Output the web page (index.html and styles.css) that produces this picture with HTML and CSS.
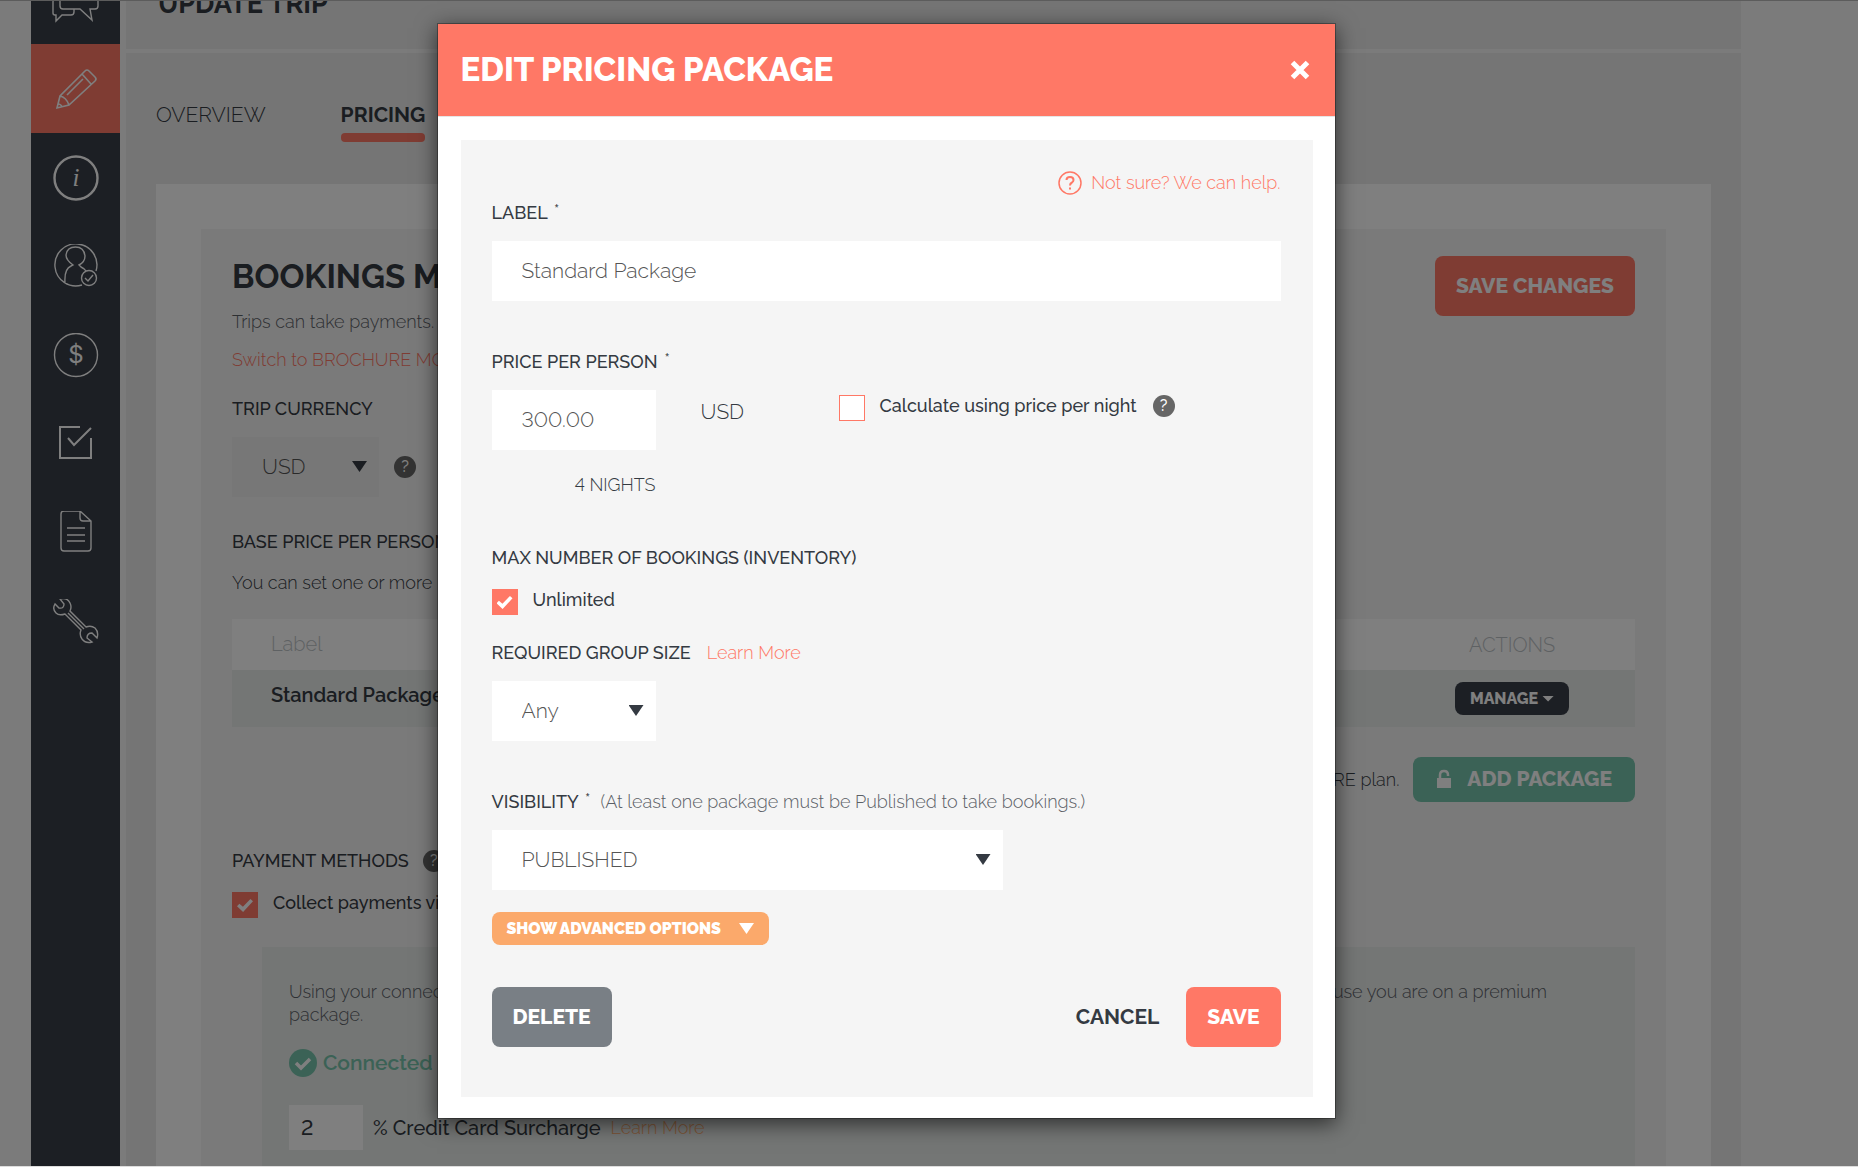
FILE: index.html
```html
<!DOCTYPE html>
<html lang="en">
<head>
  <meta charset="UTF-8" />
  <title>Update Trip - Pricing</title>
  <link rel="stylesheet" href="styles.css">
</head>
<body>
  <div class="stage">
    <div class="page">
      <!-- Sidebar -->
      <nav class="sidebar">
        <a href="#" aria-label="Messages">
          <svg width="50" height="46" viewBox="0 0 50 46"><path d="M9 20V4h35q3 0 3 3v22q0 3-3 3h-5l2 11-12-11H12q-3 0-3-3v-7M27 22v2M9 22H5q-3 0-3 3v11q0 2 2 2h1v6l6-6h9q3 0 3-3v-3"/></svg>
        </a>
        <a href="#" class="active" aria-label="Edit">
          <svg width="46" height="46" viewBox="0 0 46 46"><path stroke-width="1.600" d="M4 42l3-12L32 5q2-2 4 0l6 6q2 2 0 4L16 39zM7 30q6 1 9 9M29 8l9 10M5 38q3 0 4 3M14 29l16-16"/></svg>
        </a>
        <a href="#" aria-label="Info">
          <svg width="46" height="46" viewBox="0 0 46 46"><circle cx="23" cy="23" r="21.500" stroke-width="2.400"/><text x="23" y="31" class="glyph-info">i</text></svg>
        </a>
        <a href="#" aria-label="Travellers">
          <svg width="46" height="46" viewBox="0 2 46 46"><path d="M29 43A21 21 0 1 1 43 29M12 41q-1-14 6-17l2-1q-7-5-7-10 1-8 9.500-8T32 14q0 6-6 9l2 2q4 2 5 4"/><circle cx="36" cy="36" r="7.500"/><path d="M32 36l3 3 5-6"/></svg>
        </a>
        <a href="#" aria-label="Pricing">
          <svg width="46" height="46" viewBox="0 1 46 46"><circle cx="23" cy="23" r="21.500"/><text x="23" y="31" class="glyph-dollar">$</text></svg>
        </a>
        <a href="#" aria-label="Checklist">
          <svg width="46" height="46" viewBox="0 2 46 46"><path stroke-width="2" d="M27 7H7v31h31V18M15 18l6 7L38 8"/></svg>
        </a>
        <a href="#" aria-label="Documents">
          <svg width="46" height="46" viewBox="0 3 46 46"><path d="M27 3H11q-3 0-3 3v34q0 3 3 3h24q3 0 3-3V13zv7q0 3 3 3h8M14 20h18M14 27h18M14 33h18"/></svg>
        </a>
        <a href="#" aria-label="Settings">
          <svg width="46" height="48" viewBox="0 2 46 48"><path d="M7 1q7-2 10 4 2 4 0 8l16 16q5-2 9 1 4 4 2 10l-5-5q-5 0-5 5l5 4q-6 2-10-3-3-4-1-9L12 16q-6 2-9-1Q-1 11 2 6l4 4q5 1 5-4zM15 15l16 16" transform="translate(0 1)"/></svg>
        </a>
      </nav>

      <main class="main">
        <header class="page-header"><h1>UPDATE TRIP</h1></header>
        <nav class="tabs">
          <a href="#">OVERVIEW</a>
          <a href="#" class="current">PRICING</a>
        </nav>

        <div class="card">
          <div class="panel">
            <div class="panel-head">
              <div>
                <h2>BOOKINGS MODE</h2>
                <p class="muted">Trips can take payments.</p>
                <a href="#" class="link mode-link">Switch to BROCHURE MODE</a>
              </div>
              <button class="btn btn-red">SAVE CHANGES</button>
            </div>

            <label class="label currency-label" for="currency">TRIP CURRENCY</label>
            <div class="currency">
              <div class="select select-dim"><select id="currency"><option>USD</option></select></div>
              <span class="help">?</span>
            </div>

            <h3 class="label base-label">BASE PRICE PER PERSON</h3>
            <p class="base-text">You can set one or more</p>

            <table class="packages">
              <thead>
                <tr><th>Label</th><th class="actions">ACTIONS</th></tr>
              </thead>
              <tbody>
                <tr><td>Standard Package</td><td class="actions"><button class="btn-manage">MANAGE <i class="caret"></i></button></td></tr>
              </tbody>
            </table>

            <div class="add-row">
              <span>Upgrade to the EXPLORE plan.</span>
              <button class="btn btn-green">
                <svg width="16" height="20" viewBox="0 0 16 20"><path d="M4 9V6q0-4 4-4t4 4v1" fill="none" stroke="currentColor" stroke-width="2.500"/><path d="M1 9h14v10H1z" fill="currentColor"/></svg>
                ADD PACKAGE
              </button>
            </div>

            <h3 class="label methods">PAYMENT METHODS <span class="help">?</span></h3>
            <label class="check-row methods-row"><input type="checkbox" checked><span>Collect payments via</span></label>

            <div class="connect">
              <p class="connect-text"><span>Using your connected<br>package.</span><span>because you are on a premium</span></p>
              <div class="connected">
                <svg width="28" height="28" viewBox="0 0 28 28"><circle cx="14" cy="14" r="14" fill="currentColor"/><path d="M7 14l5 5 9-9" fill="none" stroke="#fff" stroke-width="3.500"/></svg>
                Connected
              </div>
              <div class="surcharge">
                <input type="text" id="surcharge" value="2">
                <label for="surcharge">% Credit Card Surcharge</label>
                <a href="#" class="link orange">Learn More</a>
              </div>
            </div>
          </div>
        </div>
      </main>
    </div>

    <!-- Modal -->
    <div class="overlay">
      <div class="modal" role="dialog" aria-labelledby="modal-title">
        <div class="modal-header">
          <h2 id="modal-title">EDIT PRICING PACKAGE</h2>
          <button class="close" aria-label="Close">
            <svg width="20" height="20" viewBox="0 0 20 20"><path d="M2.500 2.500l15 15M17.500 2.500l-15 15" stroke="currentColor" stroke-width="5"/></svg>
          </button>
        </div>
        <div class="modal-body">
          <form class="form">
            <a href="#" class="link help-link">
              <svg width="24" height="24" viewBox="0 0 24 24" fill="none" stroke="currentColor"><circle cx="12" cy="12" r="11" stroke-width="1.500"/><path stroke-width="2" d="M8.500 9q0-3 3.500-3t3.500 3q0 1.500-1.500 2.500-2 1-2 3M12 16.500v2"/></svg>
              Not sure? We can help.
            </a>

            <label class="label first" for="label">LABEL <sup>*</sup></label>
            <input class="field" type="text" id="label" value="Standard Package">

            <label class="label group" for="price">PRICE PER PERSON <sup>*</sup></label>
            <div class="price-row">
              <input class="field small" type="text" id="price" value="300.00">
              <span class="unit">USD</span>
              <label class="check-row"><input type="checkbox"><span>Calculate using price per night</span></label>
              <span class="help">?</span>
            </div>
            <p class="nights">4 NIGHTS</p>

            <h3 class="label group">MAX NUMBER OF BOOKINGS (INVENTORY)</h3>
            <label class="check-row unlimited"><input type="checkbox" checked><span>Unlimited</span></label>

            <div class="label-row">
              <label class="label" for="size">REQUIRED GROUP SIZE</label>
              <a href="#" class="link">Learn More</a>
            </div>
            <div class="select small"><select id="size"><option>Any</option></select></div>

            <div class="label-row group">
              <label class="label" for="visibility">VISIBILITY <sup>*</sup></label>
              <span class="note">(At least one package must be Published to take bookings.)</span>
            </div>
            <div class="select wide"><select id="visibility"><option>PUBLISHED</option></select></div>

            <button type="button" class="btn-advanced">SHOW ADVANCED OPTIONS <i class="arrow"></i></button>

            <div class="modal-actions">
              <button type="button" class="btn btn-gray">DELETE</button>
              <button type="button" class="btn-cancel">CANCEL</button>
              <button type="button" class="btn btn-red">SAVE</button>
            </div>
          </form>
        </div>
      </div>
    </div>
  </div>
</body>
</html>
```
FILE: styles.css
```css
* {
  box-sizing: border-box;
}
body {
  margin: 0;
  height: 100vh;
  display: flex;
  flex-direction: column;
  background-color: #fff;
  border-top: 1px solid #5c5c5c;
  font-family: Raleway, Inter, sans-serif;
  font-size: 18px;
  font-weight: 300;
  font-variant-numeric: lining-nums;
  line-height: 24px;
  color: #343a42;
}
h1, h2, h3, p {
  margin: 0;
}
button, input, select {
  font-family: inherit;
  font-variant-numeric: inherit;
  color: inherit;
  border: none;
  border-radius: 0;
}
button {
  cursor: pointer;
}
a {
  color: inherit;
  text-decoration: none;
}
.stage {
  flex: 1;
  position: relative;
  overflow: hidden;
  margin-bottom: 5px;
  border-bottom: 1px solid #ddd;
}
/* scrolled a little way down */
.page {
  display: flex;
  height: calc(100% + 46px);
  margin-top: -46px;
  padding: 0 117px 0 31px;
  background-color: #f7f7f7;
}

/* Sidebar */
.sidebar {
  width: 89px;
  flex-shrink: 0;
  margin-right: 6px;
  background-color: #383e48;
}
.sidebar a {
  display: flex;
  align-items: center;
  justify-content: center;
  height: 89px;
}
.sidebar .active {
  background-color: #ff7866;
}
.sidebar svg {
  fill: none;
  stroke: #fff;
  stroke-width: 1.4;
}
.sidebar text {
  fill: #fff;
  stroke: none;
  text-anchor: middle;
}
.glyph-info {
  font: italic 25px "Liberation Serif", serif;
}
.glyph-dollar {
  font: 24px Inter, sans-serif;
}

/* Main */
.main {
  flex: 1;
  background-color: #ebebeb;
}
.page-header {
  height: 98px;
  padding: 37px 32px 0;
  border-bottom: 4px solid #f7f7f7;
}
.page-header h1 {
  font-size: 27px;
  line-height: 24px;
  font-weight: 700;
}
.tabs {
  display: flex;
  gap: 75px;
  padding: 50px 30px 42px;
  font-size: 21px;
}
.tabs a {
  height: 39px;
}
.tabs .current {
  font-weight: 700;
}
.tabs .current::after {
  content: "";
  display: block;
  height: 9px;
  margin-top: 6px;
  border-radius: 4px;
  background-color: #ff7866;
}
.card {
  margin: 0 30px;
  padding: 45px;
  background-color: #fff;
}
.panel {
  padding: 27px 31px;
  background-color: #f5f5f5;
}
.panel-head {
  display: flex;
  justify-content: space-between;
  align-items: flex-start;
}
.panel-head h2 {
  font-size: 33px;
  line-height: 42px;
  font-weight: 700;
}
.muted {
  margin-top: 12px;
  color: #5b6066;
}
.link {
  color: #ff7866;
}
.mode-link {
  display: block;
  margin-top: 14px;
}
.label {
  display: block;
  font-size: 18px;
  line-height: 24px;
  font-weight: 500;
}
.currency-label {
  margin-top: 25px;
}
.currency {
  display: flex;
  align-items: center;
  gap: 15px;
  margin-top: 16px;
}
.base-label {
  margin-top: 33px;
}
.base-text {
  margin-top: 17px;
}
.help {
  display: inline-flex;
  align-items: center;
  justify-content: center;
  width: 22px;
  height: 22px;
  border-radius: 50%;
  background-color: #666;
  color: #fff;
  font-size: 16px;
  font-weight: 500;
}

/* Selects and fields */
.select {
  position: relative;
  margin-top: 16px;
}
.select select {
  appearance: none;
  width: 100%;
  height: 60px;
  padding: 0 30px 2px;
  background-color: #fff;
  color: #555;
  font-size: 21px;
  font-weight: 300;
}
.select::after {
  content: "";
  position: absolute;
  right: 12px;
  top: 24px;
  width: 15px;
  height: 11px;
  background-color: #343a42;
  clip-path: polygon(0 0, 100% 0, 50% 100%);
}
.select-dim {
  width: 147px;
  margin: 0;
}
.select-dim select {
  background-color: #efefef;
}
.small {
  width: 164px;
}
.wide {
  width: 511px;
  max-width: 100%;
}
.field {
  height: 60px;
  padding: 0 30px 2px;
  background-color: #fff;
  color: #555;
  font-size: 21px;
  font-weight: 300;
}
.check-row {
  display: flex;
  gap: 15px;
  height: 26px;
  font-weight: 500;
}
.check-row span {
  line-height: 22px;
}
.check-row input {
  appearance: none;
  width: 26px;
  height: 26px;
  margin: 0;
  border: 1px solid #ff7866;
  background-color: #fff;
}
.check-row input:checked {
  background-color: #ff7866;
}
.check-row input:checked::before {
  content: "";
  display: block;
  width: 16px;
  height: 13px;
  margin: 6px 4px;
  background-color: #fff;
  clip-path: polygon(0 55%, 15% 36%, 37% 60%, 84% 0, 100% 18%, 38% 100%);
}

/* Package table */
.packages {
  width: 100%;
  margin-top: 24px;
  border-collapse: collapse;
  font-size: 20px;
  text-align: left;
}
.packages th {
  height: 51px;
  padding: 0 39px 2px;
  background-color: #fff;
  color: #bcc3c6;
  font-weight: 300;
}
.packages td {
  height: 57px;
  padding: 0 39px 8px;
  background-color: #e8eceb;
  font-weight: 600;
}
.packages .actions {
  width: 246px;
  padding: 0;
  text-align: center;
}
.btn-manage {
  display: inline-flex;
  align-items: center;
  gap: 4px;
  height: 33px;
  padding: 0 15px;
  border-radius: 8px;
  background-color: #383e48;
  color: #fff;
  font-size: 16px;
  font-weight: 800;
}
.caret {
  width: 12px;
  height: 6px;
  background-color: #fff;
  clip-path: polygon(0 0, 100% 0, 50% 100%);
}
.add-row {
  display: flex;
  justify-content: flex-end;
  align-items: center;
  gap: 14px;
  margin-top: 30px;
}
.btn {
  height: 60px;
  padding: 0 21px 2px;
  border-radius: 8px;
  color: #fff;
  font-size: 21px;
  font-weight: 800;
}
.btn-red {
  background-color: #ff7866;
}
.btn-gray {
  background-color: #797f85;
}
.btn-green {
  display: flex;
  align-items: center;
  gap: 15px;
  height: 45px;
  padding: 0 23px 2px;
  background-color: #77c4ac;
}

/* Payments */
.methods {
  display: flex;
  align-items: center;
  gap: 14px;
  margin-top: 47px;
}
.methods-row {
  margin-top: 19px;
}
.connect {
  margin: 29px 0 0 30px;
  padding: 33px 27px 80px;
  background-color: #e8eceb;
}
.connect-text {
  display: flex;
  justify-content: space-between;
  padding-right: 61px;
  line-height: 23px;
  color: #5b6066;
}
.connected {
  display: flex;
  align-items: center;
  gap: 6px;
  height: 28px;
  margin-top: 23px;
  color: #77c4ac;
  font-size: 21px;
  font-weight: 600;
}
.surcharge {
  display: flex;
  align-items: center;
  gap: 10px;
  margin-top: 28px;
}
.surcharge input {
  width: 74px;
  height: 45px;
  padding: 0 12px;
  background-color: #fff;
  font-size: 21px;
  font-weight: 500;
}
.surcharge label {
  font-size: 20px;
  font-weight: 500;
}
.orange {
  color: #fba96b;
}

/* Modal */
.overlay {
  position: absolute;
  inset: 0;
  padding: 22px 117px 0 31px;
  background-color: rgba(0, 0, 0, 0.5);
}
.modal {
  width: 899px;
  max-width: 100%;
  margin: 0 auto;
  border: 1px solid rgba(0, 0, 0, 0.3);
  background-color: #fff;
  background-clip: padding-box;
  box-shadow: 0 5px 20px rgba(0, 0, 0, 0.6);
}
.modal-header {
  display: flex;
  justify-content: space-between;
  align-items: center;
  height: 93px;
  padding: 0 25px 0 23px;
  border-bottom: 1px solid #e5e5e5;
  background-color: #ff7866;
  color: #fff;
}
.modal-header h2 {
  font-size: 33px;
  line-height: 42px;
  font-weight: 800;
}
.close {
  display: flex;
  padding: 0;
  background: none;
}
.modal-body {
  padding: 23px 22px 21px 23px;
}
.form {
  display: flex;
  flex-direction: column;
  align-items: flex-start;
  padding: 31px 32px 50px 31px;
  background-color: #f5f5f5;
}
.help-link {
  display: flex;
  align-items: center;
  gap: 9px;
  align-self: flex-end;
}
.first {
  margin-top: 6px;
}
.group {
  margin-top: 49px;
}
.label sup {
  margin-left: 2px;
  font-size: 18px;
  font-weight: 400;
  line-height: 0;
  vertical-align: 2px;
}
.form > .field {
  width: 100%;
  margin-top: 16px;
}
.price-row {
  display: flex;
  align-items: flex-start;
  margin-top: 16px;
}
.unit {
  width: 138px;
  margin-left: 45px;
  font-size: 21px;
  line-height: 44px;
}
.price-row .check-row, .price-row .help {
  margin-top: 5px;
}
.price-row .help {
  margin-left: 16px;
}
.nights {
  width: 164px;
  margin-top: 23px;
  text-align: right;
}
.unlimited {
  margin-top: 19px;
}
.label-row {
  display: flex;
  gap: 16px;
}
.unlimited + .label-row {
  margin-top: 26px;
}
.note {
  color: #5b6066;
}
.label-row.group {
  gap: 10px;
}
.btn-advanced {
  display: flex;
  align-items: center;
  gap: 18px;
  height: 33px;
  margin-top: 22px;
  padding: 0 15px;
  border-radius: 8px;
  background-color: #fba96b;
  color: #fff;
  font-size: 16px;
  font-weight: 900;
}
.arrow {
  width: 15px;
  height: 11px;
  background-color: #fff;
  clip-path: polygon(0 0, 100% 0, 50% 100%);
}
.modal-actions {
  display: flex;
  width: 100%;
  margin-top: 42px;
}
.btn-cancel {
  margin-left: auto;
  padding: 0 27px 2px;
  background: none;
  font-size: 21px;
  font-weight: 700;
}
```
